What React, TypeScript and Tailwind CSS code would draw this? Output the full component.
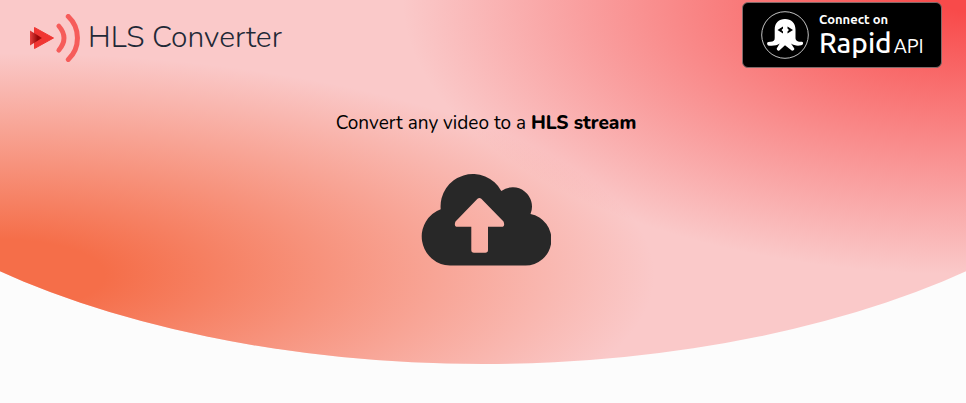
function LogoMark() {
  return (
    <svg className="h-12 w-[50px] shrink-0" viewBox="30 14 50 48" fill="none" aria-hidden="true">
      <defs>
        <linearGradient id="tail" x1="30" y1="38" x2="42" y2="38" gradientUnits="userSpaceOnUse">
          <stop offset="0" stopColor="#e8403e" />
          <stop offset="0.65" stopColor="#930606" />
          <stop offset="1" stopColor="#a80c0c" />
        </linearGradient>
      </defs>
      <path d="M34.5 27.5 53.5 38 34.5 48.5Z" fill="#f03532" stroke="#f03532" strokeLinejoin="round" />
      <path d="M30 30.5 42 38 30 45.5Z" fill="url(#tail)" />
      <path d="M58.8 26Q69.2 38 58.8 50.2" stroke="#f65c5a" strokeWidth="4.8" strokeLinecap="round" />
      <path d="M68.3 16.5C80.5 28 80.5 48 68.3 59.5" stroke="#f65c5a" strokeWidth="5" strokeLinecap="round" />
    </svg>
  );
}

function Octopus() {
  return (
    <svg className="h-12 w-12 shrink-0" viewBox="0 0 48 48" aria-hidden="true">
      <circle cx="24" cy="24" r="23.3" fill="none" stroke="#d8d8d8" strokeWidth="0.9" />
      <path
        fill="#fff"
        d="M13.7 18.5C13.7 12 18 8 24 8S34.5 12 34.5 18.5V27C34.5 30 37 30.8 41 30.8Q42.7 31 42 33Q41.5 34.3 39 34.6C35.5 35 32.5 34.3 30 32.6L33.3 37.6Q33.5 39.7 31 39.7L24 34.3 18 39.7Q15.5 40 15.7 37.6L18.7 32.6C16 34.5 11.500 35.300 7 34.5Q5.500 33 6.300 31.5Q7 30.8 9.5 30.8C12.500 30.8 13.700 29.500 13.700 27Z"
      />
      <path d="M22 15.5 16.5 19 22 22.5V20.5L20.5 19 22 17.5ZM26.5 15.5 32 19 26.5 22.5V20.5L28 19 26.5 17.5Z" fill="#000" />
    </svg>
  );
}

function CloudUpload() {
  return (
    <svg className="h-[92px] w-[130px]" viewBox="0 0 130 92" aria-hidden="true">
      <path
        fill="#282828"
        fillRule="evenodd"
        d="M29 91.5A29 29 0 0 1 19.7 35.3A32.3 32.3 0 0 1 80.3 17A19.3 19.3 0 0 1 109.500 40A26 26 0 0 1 104 91.5ZM56.5 24.8 34.5 47.500Q32.500 52.700 36.500 52.7H50.3V76Q50.3 78.7 53 78.7H64.3Q67 78.7 67 76V52.7H80.5Q84.5 52.7 82.5 47.5L60.3 24.8Q58.4 23.3 56.5 24.8Z"
      />
    </svg>
  );
}

export default function App() {
  return (
    <div className="min-h-screen bg-[#fcfcfc] font-['Nunito','Lato',sans-serif]">
      <div className="min-h-[364px] bg-[#fac9c9] bg-[radial-gradient(655px_222px_at_0px_275px,#f56e49_16%,#f56e4900_100%),radial-gradient(575px_280px_at_100%_0px,#f84a4a_4%,#f84a4a00_98%)] [clip-path:ellipse(75%_100%_at_50%_0)]">
        <header className="flex items-start justify-between pr-6 pl-[30px]">
          <a href="#" className="flex items-center gap-2 pt-[14px]">
            <LogoMark />
            <h1 className="text-3xl leading-10 font-light whitespace-nowrap text-[#1f2937]">HLS Converter</h1>
          </a>
          <a
            href="#"
            className="mt-[2px] flex h-[66px] w-[200px] items-center gap-[10px] rounded-md border border-[#806a6a] bg-black pl-[18px] font-['Ubuntu','Noto_Sans',sans-serif] text-white"
          >
            <Octopus />
            <span className="flex flex-col">
              <span className="text-[13px] leading-4 font-bold">Connect on</span>
              <span className="flex items-baseline gap-[2px] leading-8">
                <span className="text-[28px] font-medium">Rapid</span>
                <span className="text-xl">API</span>
              </span>
            </span>
          </a>
        </header>
        <main className="flex flex-col items-center pt-10 pl-1.5">
          <p className="text-[19px] leading-[30px] text-black">
            Convert any video to a <strong className="font-extrabold">HLS stream</strong>
          </p>
          <button type="button" aria-label="Upload a video" className="mt-9 cursor-pointer">
            <CloudUpload />
          </button>
        </main>
      </div>
    </div>
  );
}
